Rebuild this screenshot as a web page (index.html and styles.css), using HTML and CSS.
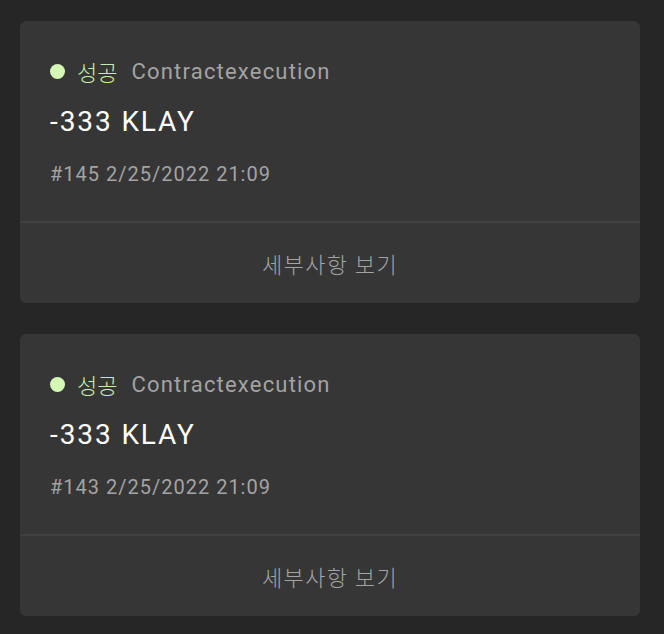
FILE: index.html
```html
<!DOCTYPE html>
<html lang="ko">
<head>
  <meta charset="UTF-8">
  <meta name="viewport" content="width=device-width, initial-scale=1.0">
  <title>거래 내역</title>
<link rel="stylesheet" href="styles.css">
</head>
<body>
  <div class="list">
    <div class="tx-card">
      <div class="tx-body">
        <div class="tx-status">
          <span class="dot"></span>
          <span class="status-label">성공</span>
          <span class="tx-type">Contractexecution</span>
        </div>
        <p class="tx-amount">-333 KLAY</p>
        <p class="tx-meta">#145 2/25/2022 21:09</p>
      </div>
      <button class="detail-button">세부사항 보기</button>
    </div>

    <div class="tx-card">
      <div class="tx-body">
        <div class="tx-status">
          <span class="dot"></span>
          <span class="status-label">성공</span>
          <span class="tx-type">Contractexecution</span>
        </div>
        <p class="tx-amount">-333 KLAY</p>
        <p class="tx-meta">#143 2/25/2022 21:09</p>
      </div>
      <button class="detail-button">세부사항 보기</button>
    </div>
  </div>
</body>
</html>
```

FILE: styles.css
```css
body {
  margin: 0;
  background-color: #262626;
  font-family: Roboto, "Noto Sans CJK KR", sans-serif;
}

.list {
  display: flex;
  flex-direction: column;
  gap: 31px;
  padding: 21px 24px 21px 20px;
}

.tx-card {
  background-color: #363636;
  border-radius: 6px;
  overflow: hidden;
}

.tx-body {
  padding: 37px 30px 35px;
  border-bottom: 2px solid #414141;
}

.tx-status {
  display: flex;
  align-items: center;
  height: 26px;
  font-size: 22px;
  letter-spacing: 1.2px;
}

.dot {
  width: 15px;
  height: 15px;
  border-radius: 50%;
  background-color: #d3f9b5;
  margin-right: 12px;
}

.status-label {
  color: #c8ecab;
  font-weight: 300;
  letter-spacing: 0;
  margin-right: 14px;
}

.tx-type {
  color: #a3a3a3;
}

.tx-amount {
  margin: 21px 0 0;
  font-size: 28px;
  line-height: 34px;
  letter-spacing: 1.9px;
  color: #ffffff;
}

.tx-meta {
  margin: 23px 0 0;
  font-size: 20px;
  line-height: 24px;
  letter-spacing: 1px;
  color: #a3a3a3;
}

.detail-button {
  display: block;
  width: 100%;
  height: 80px;
  background: none;
  border: none;
  font-family: inherit;
  font-size: 22px;
  font-weight: 300;
  letter-spacing: 1.3px;
  color: #a3a3a3;
  cursor: pointer;
}
```
